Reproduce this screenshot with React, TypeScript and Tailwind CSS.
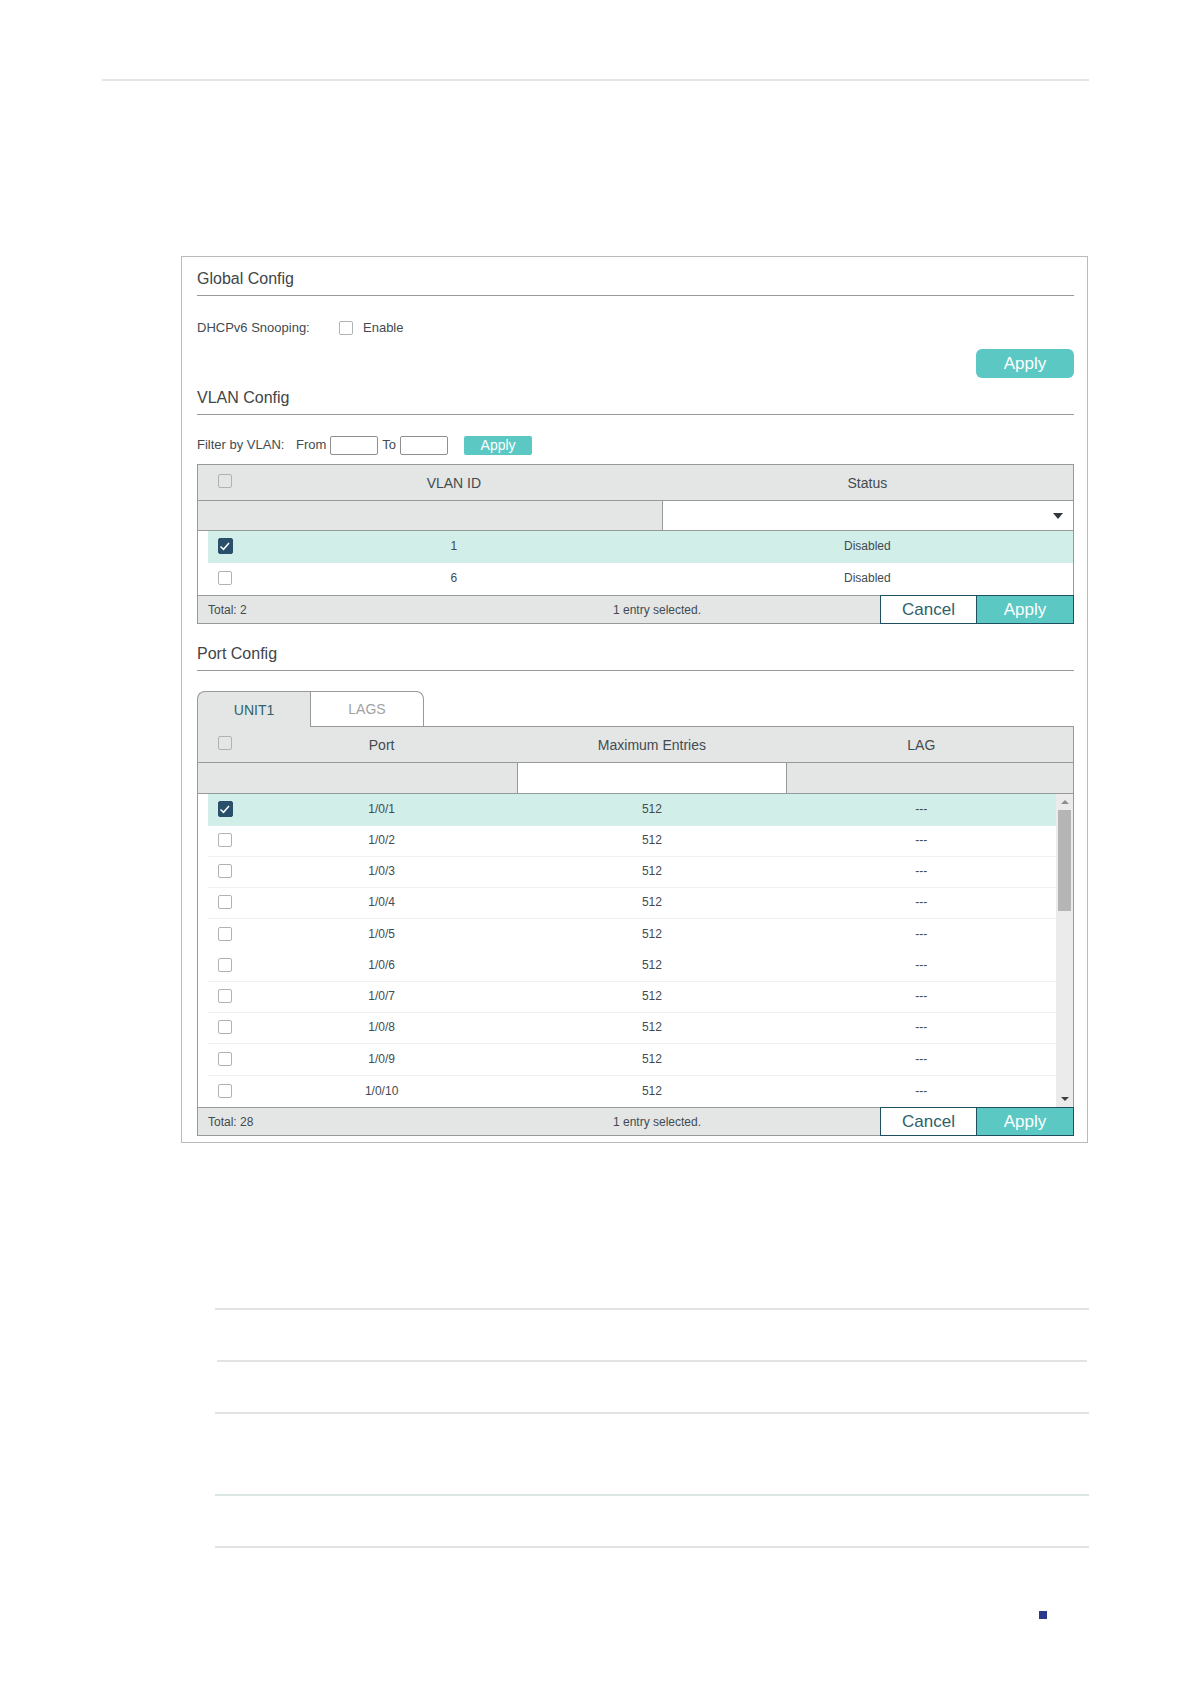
import { useState } from "react";
import type { InputHTMLAttributes, ReactNode } from "react";
import clsx from "clsx";

const vlans = [
  { id: "1", status: "Disabled" },
  { id: "6", status: "Disabled" },
];

const ports = Array.from({ length: 10 }, (_, i) => ({ name: `1/0/${i + 1}`, max: "512", lag: "---" }));

function Checkbox({ className, ...props }: InputHTMLAttributes<HTMLInputElement>) {
  return (
    <span className="inline-grid size-4 place-items-center align-middle">
      <input
        type="checkbox"
        className={clsx(
          "peer [grid-area:1/1] size-3.5 appearance-none rounded-xs border border-[#b0b3b4] checked:h-4 checked:w-[15px] checked:border-[#28506a] checked:bg-[#28506a]",
          className
        )}
        {...props}
      />
      <svg
        viewBox="0 0 16 16"
        className="pointer-events-none invisible [grid-area:1/1] size-4 fill-none stroke-white peer-checked:visible"
        strokeWidth="1.5"
      >
        <path d="M3.5 8.5 6.5 11.3 12 5" />
      </svg>
    </span>
  );
}

function SectionTitle({ children }: { children: ReactNode }) {
  return <h2 className="border-b border-[#97999b] pb-1 text-base leading-6 text-[#414548]">{children}</h2>;
}

function TableFooter({ total }: { total: number }) {
  return (
    <div className="flex h-[29px] text-xs">
      <div className="flex flex-1 items-center border-y border-l border-[#97999b] bg-[#e4e6e5]">
        <span className="w-[236px] pl-2.5">Total: {total}</span>
        <span className="flex-1 text-center">1 entry selected.</span>
      </div>
      <button className="w-24 border border-r-0 border-[#1f5062] bg-white text-[17px] leading-none text-[#2f5f6c]">
        Cancel
      </button>
      <button className="w-[98px] border border-[#1f5062] bg-[#5cc8c4] text-[17px] leading-none text-white">
        Apply
      </button>
    </div>
  );
}

const headCell = "h-9 border-b border-[#97999b] bg-[#e4e6e5] p-0 text-sm font-normal";
const headCheckCell = "h-9 border-b border-[#97999b] bg-[#e4e6e5] pt-0 pr-0 pb-[3px] pl-1.5";
const filterCell = "border-b border-[#97999b] bg-[#e4e6e5] p-0";

function VlanTable() {
  const [selected, setSelected] = useState(["1"]);
  const toggle = (id: string) =>
    setSelected((s) => (s.includes(id) ? s.filter((v) => v !== id) : [...s, id]));

  return (
    <div className="mt-[9px]">
      <div className="border-x border-t border-[#97999b]">
        <table className="w-full table-fixed border-separate border-spacing-0 text-center text-xs">
          <colgroup>
            <col className="w-2.5" />
            <col className="w-[38px]" />
            <col />
            <col className="w-[47%]" />
          </colgroup>
          <thead>
            <tr>
              <th colSpan={2} className={headCheckCell}>
                <Checkbox aria-label="Select all VLANs" />
              </th>
              <th className={headCell}>VLAN ID</th>
              <th className={headCell}>Status</th>
            </tr>
            <tr>
              <td colSpan={3} className={filterCell} />
              <td className="h-[30px] border-b border-l border-[#97999b] bg-white p-0">
                <div className="flex items-center">
                  <select aria-label="Status" className="h-7 min-w-0 flex-1 appearance-none bg-transparent px-2">
                    <option value=""></option>
                    <option>Enabled</option>
                    <option>Disabled</option>
                  </select>
                  <svg viewBox="0 0 10 6" className="mr-2.5 h-1.5 w-2.5 fill-[#33383c]">
                    <path d="M0 0h10L5 6z" />
                  </svg>
                </div>
              </td>
            </tr>
          </thead>
          <tbody>
            {vlans.map((v) => {
              const on = selected.includes(v.id);
              const cell = clsx("h-8 p-0 pb-0.5", on && "bg-[#d2eee8]");
              return (
                <tr key={v.id}>
                  <td className="p-0" />
                  <td className={clsx(cell, "pr-1")}>
                    <Checkbox aria-label={`VLAN ${v.id}`} checked={on} onChange={() => toggle(v.id)} />
                  </td>
                  <td className={cell}>{v.id}</td>
                  <td className={cell}>{v.status}</td>
                </tr>
              );
            })}
          </tbody>
        </table>
      </div>
      <TableFooter total={2} />
    </div>
  );
}

function ScrollTrack() {
  return (
    <div className="flex h-[313px] flex-col items-center bg-[#ebebeb]">
      <svg viewBox="0 0 8 4" className="mt-1.5 mb-1.5 h-1 w-2 fill-[#8c8e90]">
        <path d="M0 4h8L4 0z" />
      </svg>
      <div className="h-[101px] w-[13px] bg-[#b5b5b5]" />
      <svg viewBox="0 0 8 4" className="mt-auto mb-1.5 h-1 w-2 fill-[#3c4043]">
        <path d="M0 0h8L4 4z" />
      </svg>
    </div>
  );
}

function PortTable() {
  const [selected, setSelected] = useState(["1/0/1"]);
  const toggle = (name: string) =>
    setSelected((s) => (s.includes(name) ? s.filter((v) => v !== name) : [...s, name]));

  return (
    <div>
      <div className="border-x border-t border-[#97999b]">
        <table className="w-full table-fixed border-separate border-spacing-0 text-center text-xs">
          <colgroup>
            <col className="w-2.5" />
            <col className="w-[38px]" />
            <col className="w-[31%]" />
            <col />
            <col />
            <col className="w-[17px]" />
          </colgroup>
          <thead>
            <tr>
              <th colSpan={2} className={headCheckCell}>
                <Checkbox aria-label="Select all ports" />
              </th>
              <th className={headCell}>Port</th>
              <th className={headCell}>Maximum Entries</th>
              <th className={headCell}>LAG</th>
              <td className={headCell} />
            </tr>
            <tr>
              <td colSpan={3} className={filterCell} />
              <td className="h-[31px] border-x border-b border-[#97999b] bg-white p-0">
                <input type="text" aria-label="Maximum Entries" className="block h-7 w-full bg-transparent px-2" />
              </td>
              <td colSpan={2} className={filterCell} />
            </tr>
          </thead>
          <tbody>
            {ports.map((p, i) => {
              const on = selected.includes(p.name);
              const cell = clsx(
                "p-0 pb-0.5",
                i % 4 === 0 ? "h-8" : "h-[31px]",
                on && "bg-[#d2eee8]",
                !on && i % 5 !== 4 && "border-b border-[#eff0f0]"
              );
              return (
                <tr key={p.name}>
                  <td className="p-0" />
                  <td className={clsx(cell, "pr-1")}>
                    <Checkbox aria-label={`Port ${p.name}`} checked={on} onChange={() => toggle(p.name)} />
                  </td>
                  <td className={cell}>{p.name}</td>
                  <td className={cell}>{p.max}</td>
                  <td className={cell}>{p.lag}</td>
                  {i === 0 && (
                    <td rowSpan={ports.length} className="p-0 align-top">
                      <ScrollTrack />
                    </td>
                  )}
                </tr>
              );
            })}
          </tbody>
        </table>
      </div>
      <TableFooter total={28} />
    </div>
  );
}

export default function App() {
  return (
    <div className="flex min-h-screen flex-col bg-white px-[102px] pt-[79px] pb-16 font-['Liberation_Sans',Arial,sans-serif] text-[#434b50]">
      <hr className="border-t-2 border-[#e4e6e5]" />

      <main className="mt-[175px] mr-px ml-[79px] border border-[#b9bbbc] pt-2.5 pr-[13px] pb-1.5 pl-[15px]">
        {/* Global Config */}
        <SectionTitle>Global Config</SectionTitle>
        <div className="mt-[22px] flex h-5 items-center text-[13px]">
          <span className="w-[141px]">DHCPv6 Snooping:</span>
          <label className="flex items-center gap-[9px]">
            <Checkbox /> Enable
          </label>
        </div>
        <div className="mt-[11px] flex justify-end">
          <button className="h-[29px] w-[98px] rounded-md bg-[#5cc8c4] text-[17px] leading-none text-white">
            Apply
          </button>
        </div>

        {/* VLAN Config */}
        <div className="mt-2">
          <SectionTitle>VLAN Config</SectionTitle>
        </div>
        <form className="mt-5 flex h-5 items-center gap-1 text-[13px]" onSubmit={(e) => e.preventDefault()}>
          <span className="w-[95px]">Filter by VLAN:</span>
          <label htmlFor="vlan-from">From</label>
          <input id="vlan-from" type="text" className="h-[19px] w-12 rounded-xs border border-[#8d9092] px-1" />
          <label htmlFor="vlan-to">To</label>
          <input id="vlan-to" type="text" className="h-[19px] w-12 rounded-xs border border-[#8d9092] px-1" />
          <button className="ml-3 h-[19px] w-[68px] rounded-xs bg-[#5cc8c4] text-sm leading-none text-white">
            Apply
          </button>
        </form>
        <VlanTable />

        {/* Port Config */}
        <div className="mt-[18px]">
          <SectionTitle>Port Config</SectionTitle>
        </div>
        <div role="tablist" className="mt-5 flex h-[35px] text-sm">
          <button
            role="tab"
            aria-selected="true"
            className="relative z-10 h-9 w-[113px] rounded-tl-lg border-t border-l border-[#97999b] bg-[#e4e6e5] text-[#2f6268]"
          >
            UNIT1
          </button>
          <button
            role="tab"
            aria-selected="false"
            className="w-[114px] rounded-tr-lg border-x border-t border-[#97999b] bg-white text-[#a0a2a4]"
          >
            LAGS
          </button>
        </div>
        <PortTable />
      </main>

      <div className="mt-[165px] ml-[113px]">
        <hr className="border-t-2 border-[#e1e4e3]" />
        <hr className="mx-0.5 mt-[50px] border-t-2 border-[#e1e4e3]" />
        <hr className="mt-[50px] border-t-2 border-[#e1e4e3]" />
        <hr className="mt-20 border-t-2 border-[#dbe5e2]" />
        <hr className="mt-[50px] border-t-2 border-[#e1e4e3]" />
      </div>
      <div className="mt-[63px] mr-[42px] size-2 self-end bg-[#2b3a8c]" />
    </div>
  );
}
